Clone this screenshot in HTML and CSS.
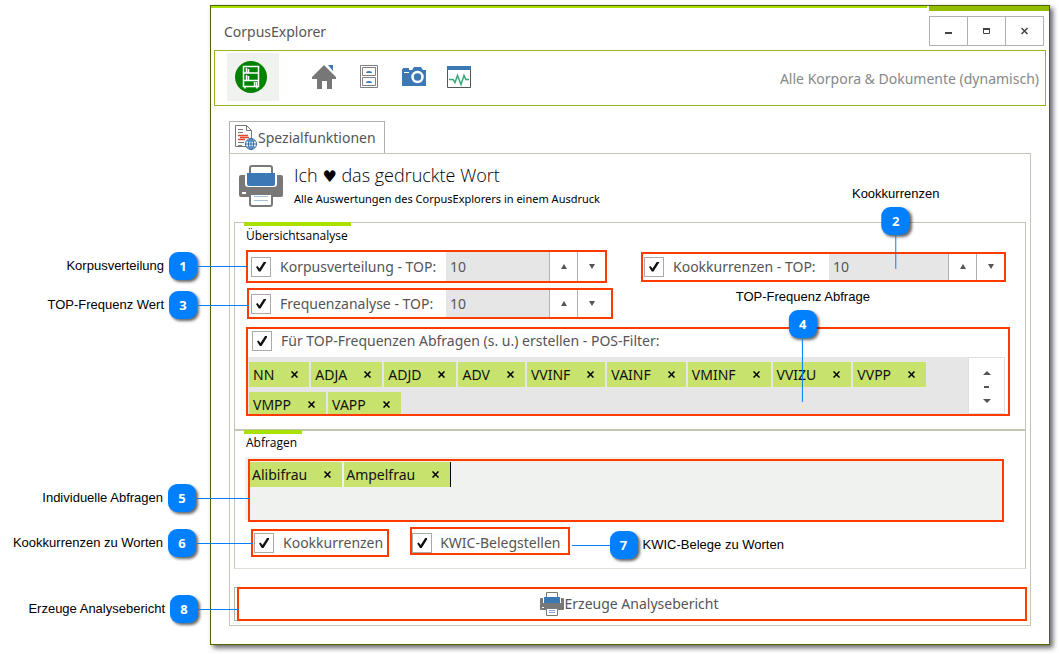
FILE: index.html
```html
<!DOCTYPE html>
<html lang="de">
<head>
<meta charset="utf-8">
<title>CorpusExplorer</title>
<link rel="stylesheet" href="styles.css">
</head>
<body>
<svg class="defs" aria-hidden="true">
  <symbol id="printer" viewBox="0 0 44 42">
    <path d="M11 9V3q0-2 2-2h18q2 0 2 2v6" fill="#fff" stroke="#787878" stroke-width="2"/>
    <path d="M0 12q0-2 2-2h4v9q0 3 3 3h26q3 0 3-3v-9h4q2 0 2 2v18q0 2-2 2H2q-2 0-2-2z" fill="#787878"/>
    <path d="M8 8h28v11q0 2-2 2H10q-2 0-2-2z" fill="#3c78b4"/>
    <path d="M3 27h4v2H3z" fill="#fff"/>
    <path d="M11 29h22v10q0 2-2 2H13q-2 0-2-2z" fill="#fff" stroke="#787878" stroke-width="2"/>
    <path d="M15 31.500h14M15 35.500h14" stroke="#a0c0e0"/>
  </symbol>
  <symbol id="printer-small" viewBox="0 0 24 24">
    <path d="M6.500 6V.5h11V6" fill="#fff" stroke="#787878"/>
    <path d="M0 7q0-1 1-1h2v5h18V6h2q1 0 1 1v10q0 1-1 1H1q-1 0-1-1z" fill="#787878"/>
    <path d="M4 5h16v6H4z" fill="#3c78b4"/>
    <path d="M2 15h2v1H2z" fill="#fff"/>
    <path d="M6.500 16.500h11v7h-11z" fill="#fff" stroke="#787878"/>
    <path d="M9 18.500h6M9 20.500h6" stroke="#80a8d8"/>
  </symbol>
  <symbol id="cross" viewBox="0 0 7 7">
    <path d="M.5.5l6 6M6.500.5l-6 6" stroke="#000" stroke-width="1.500"/>
  </symbol>
</svg>
<main class="window">
  <header class="titlebar">
    <span class="app-name">CorpusExplorer</span>
    <div class="controls">
      <button type="button" aria-label="Minimieren"><svg width="8" height="8"><path d="M0 5h7v2H0z" fill="#444"/></svg></button>
      <button type="button" aria-label="Maximieren"><svg width="8" height="8"><path d="M.5 1.500h6v5h-6z" fill="none" stroke="#444"/><path d="M0 1h7v2H0z" fill="#444"/></svg></button>
      <button type="button" aria-label="Schließen"><svg width="8" height="8"><path d="M.5 1l6 6M6.500 1l-6 6" stroke="#444" stroke-width="1.500"/></svg></button>
    </div>
  </header>
  <nav class="toolbar">
    <button type="button" class="logo" aria-label="Korpus">
      <svg width="32" height="32"><circle cx="16" cy="16" r="16" fill="#008200"/><g fill="none" stroke="#fff" stroke-width="1.500"><path d="M8.500 5.500h15v20h-15zM8.500 12h15M8.500 19.500h15M10 25.500v2M22 25.500v2M11.500 7v5M13.500 8v4M11.500 14v5M13.500 15v4M19.500 21v4M21.500 21v4"/></g></svg>
    </button>
    <button type="button" aria-label="Start"><svg width="24" height="24"><path d="M12 0l12 12v2h-4v10h-5v-8h-5v8H5V14H0v-2z" fill="#777"/><path d="M16 0h5v6z" fill="#3c78b4"/></svg></button>
    <button type="button" aria-label="Archiv"><svg width="24" height="24"><g fill="none" stroke="#808080"><path d="M3.500.5h17v22h-17zM5.500 2.500h13v8h-13zM5.500 12.500h13v8h-13z"/></g><path d="M9 8q0-2 3-2t3 2zM9 18q0-2 3-2t3 2z" fill="#3c78b4"/></svg></button>
    <button type="button" aria-label="Schnappschuss"><svg width="24" height="24"><path d="M0 6V4h1V3h6v2h3l2-3h7l2 3h3v16H0z" fill="#3c78b4"/><path d="M2 7h5v1H2z" fill="#fff"/><circle cx="15.500" cy="12" r="5" fill="none" stroke="#fff" stroke-width="2.500"/></svg></button>
    <button type="button" aria-label="Analyse"><svg width="24" height="24"><path d="M.5 1.500h23v21H.5z" fill="#fff" stroke="#555"/><path d="M0 1h24v4H0z" fill="#3c78b4"/><path d="M2 14.500h4l2 3 2.500-7 3.500 9 3-9 2 4h3" fill="none" stroke="#38a878" stroke-width="1.500"/></svg></button>
    <span class="scope">Alle Korpora &amp; Dokumente (dynamisch)</span>
  </nav>
  <div class="content">
    <button type="button" class="tab">
      <svg width="24" height="26"><g fill="none" stroke="#777"><path d="M12.500 21.500H1.500V.5h11l5 5v9M12.500.5v5h5"/><path d="M4 4.500h5M4 7.500h5M4 17.500h6M4 20.500h4"/></g><path d="M4 10.500h10M6 12.500h9M4 14.500h7" stroke="#e04830" stroke-width="1.500"/><circle cx="17" cy="19" r="5.500" fill="#fff" stroke="#2868a8"/><path d="M11.500 19h11M13 16h8M13 22h8M17 13.500v11" stroke="#2868a8"/><ellipse cx="17" cy="19" rx="2.500" ry="5.500" fill="none" stroke="#2868a8"/></svg>
      Spezialfunktionen
    </button>
    <section class="panel">
      <div class="heading">
        <svg width="44" height="42"><use href="#printer"/></svg>
        <div>
          <h1>Ich <span class="heart">♥</span> das gedruckte Wort</h1>
          <p>Alle Auswertungen des CorpusExplorers in einem Ausdruck</p>
        </div>
      </div>

      <section class="group overview">
        <h2>Übersichtsanalyse</h2>
        <div class="top-row">
          <div class="mark spin corpus">
            <label><input type="checkbox" checked><span>Korpusverteilung - TOP:</span></label>
            <input type="text" value="10" aria-label="Korpusverteilung TOP">
            <button type="button" aria-label="Mehr"><i class="up"></i></button><button type="button" aria-label="Weniger"><i class="down"></i></button>
            <div class="callout left"><span>Korpusverteilung</span><b>1</b><i class="line"></i></div>
          </div>
          <div class="mark spin cooc">
            <label><input type="checkbox" checked><span>Kookkurrenzen - TOP:</span></label>
            <input type="text" value="10" aria-label="Kookkurrenzen TOP">
            <button type="button" aria-label="Mehr"><i class="up"></i></button><button type="button" aria-label="Weniger"><i class="down"></i></button>
            <div class="callout above"><span>Kookkurrenzen</span><b>2</b><i class="line"></i></div>
          </div>
        </div>
        <div class="mark spin freq">
          <label><input type="checkbox" checked><span>Frequenzanalyse - TOP:</span></label>
          <input type="text" value="10" aria-label="Frequenzanalyse TOP">
          <button type="button" aria-label="Mehr"><i class="up"></i></button><button type="button" aria-label="Weniger"><i class="down"></i></button>
          <div class="callout left"><span>TOP-Frequenz Wert</span><b>3</b><i class="line"></i></div>
        </div>
        <div class="mark filter">
          <label><input type="checkbox" checked><span>Für TOP-Frequenzen Abfragen (s. u.) erstellen - POS-Filter:</span></label>
          <div class="filter-body">
            <div class="tokens">
              <span class="token">NN<button type="button" aria-label="NN entfernen"><svg width="7" height="7"><use href="#cross"/></svg></button></span>
              <span class="token">ADJA<button type="button" aria-label="ADJA entfernen"><svg width="7" height="7"><use href="#cross"/></svg></button></span>
              <span class="token">ADJD<button type="button" aria-label="ADJD entfernen"><svg width="7" height="7"><use href="#cross"/></svg></button></span>
              <span class="token">ADV<button type="button" aria-label="ADV entfernen"><svg width="7" height="7"><use href="#cross"/></svg></button></span>
              <span class="token">VVINF<button type="button" aria-label="VVINF entfernen"><svg width="7" height="7"><use href="#cross"/></svg></button></span>
              <span class="token">VAINF<button type="button" aria-label="VAINF entfernen"><svg width="7" height="7"><use href="#cross"/></svg></button></span>
              <span class="token">VMINF<button type="button" aria-label="VMINF entfernen"><svg width="7" height="7"><use href="#cross"/></svg></button></span>
              <span class="token">VVIZU<button type="button" aria-label="VVIZU entfernen"><svg width="7" height="7"><use href="#cross"/></svg></button></span>
              <span class="token">VVPP<button type="button" aria-label="VVPP entfernen"><svg width="7" height="7"><use href="#cross"/></svg></button></span>
              <span class="token">VMPP<button type="button" aria-label="VMPP entfernen"><svg width="7" height="7"><use href="#cross"/></svg></button></span>
              <span class="token">VAPP<button type="button" aria-label="VAPP entfernen"><svg width="7" height="7"><use href="#cross"/></svg></button></span>
            </div>
            <div class="scroller">
              <button type="button" aria-label="Nach oben"><i class="up"></i></button>
              <i class="dash"></i>
              <button type="button" aria-label="Nach unten"><i class="down"></i></button>
            </div>
          </div>
          <div class="callout above"><span>TOP-Frequenz Abfrage</span><b>4</b><i class="line"></i></div>
        </div>
      </section>

      <section class="group queries">
        <h2>Abfragen</h2>
        <div class="mark query-box">
          <div class="tokens">
            <span class="token">Alibifrau<button type="button" aria-label="Alibifrau entfernen"><svg width="7" height="7"><use href="#cross"/></svg></button></span>
            <span class="token caret">Ampelfrau<button type="button" aria-label="Ampelfrau entfernen"><svg width="7" height="7"><use href="#cross"/></svg></button></span>
          </div>
          <div class="callout left"><span>Individuelle Abfragen</span><b>5</b><i class="line"></i></div>
        </div>
        <div class="options">
          <div class="mark option">
            <label><input type="checkbox" checked><span>Kookkurrenzen</span></label>
            <div class="callout left"><span>Kookkurrenzen zu Worten</span><b>6</b><i class="line"></i></div>
          </div>
          <div class="mark option kwic">
            <label><input type="checkbox" checked><span>KWIC-Belegstellen</span></label>
            <div class="callout right"><i class="line"></i><b>7</b><span>KWIC-Belege zu Worten</span></div>
          </div>
        </div>
      </section>

      <div class="mark action">
        <button type="button" class="report"><svg width="24" height="24"><use href="#printer-small"/></svg>Erzeuge Analysebericht</button>
        <div class="callout left"><span>Erzeuge Analysebericht</span><b>8</b><i class="line"></i></div>
      </div>
    </section>
  </div>
</main>
</body>
</html>
```
FILE: styles.css
```css
* { box-sizing: border-box; }

body {
  margin: 0;
  padding: 5px 9px 9px 210px;
  background: #fff;
  color: #555;
  font: 14px/20px "Noto Sans", "Open Sans", sans-serif;
}

button, input {
  margin: 0;
  padding: 0;
  border: 0;
  border-radius: 0;
  background: none;
  color: inherit;
  font: inherit;
}

svg { display: block; flex: none; }
.defs { position: absolute; width: 0; height: 0; }

/* Window frame */
.window {
  border: 1px solid #506400;
  background: #fff;
  box-shadow: 3px 3px 5px rgba(0, 0, 0, .6);
}

.titlebar {
  display: flex;
  justify-content: space-between;
  height: 44px;
  padding-left: 13px;
  border-top: 2px solid #a8e000;
}
.app-name { padding-top: 14px; }
.controls {
  display: flex;
  align-items: flex-start;
  margin-top: -2px;
  padding-right: 6px;
  border-top: 5px solid #94bd00;
  box-shadow: -2px 0 0 #fff;
}
.controls button {
  display: grid;
  place-items: center;
  width: 39px;
  height: 30px;
  margin: 5px -1px 0 0;
  border: 1px solid #b0b0b0;
}

.toolbar {
  display: flex;
  align-items: center;
  gap: 21px;
  height: 56px;
  margin: 0 3px;
  padding: 0 6px 2px 12px;
  border: 1px solid #94b81c;
}
.toolbar button { width: 24px; }
.toolbar .logo {
  display: flex;
  align-items: center;
  width: 52px;
  height: 48px;
  margin-right: 12px;
  padding-left: 8px;
  background: #f0f2f0;
}
.scope { margin-left: auto; padding-top: 4px; color: #888; }

.content { padding: 15px 18px 18px; }
.tab {
  display: flex;
  align-items: center;
  height: 32px;
  padding: 0 8px 0 4px;
  border: 1px solid #b0b0b0;
  border-bottom: 0;
}

.panel { padding: 0 4px 4px; border: 1px solid #c5c5b5; }

.heading {
  display: flex;
  align-items: center;
  gap: 11px;
  height: 68px;
  padding: 0 5px 4px;
  color: #000;
}
.heading h1 { margin: 0; font: 300 18px/24px "Open Sans", "Noto Sans", sans-serif; }
.heading p { margin: 0; font-size: 11px; line-height: 20px; }
.heart { font-family: "DejaVu Sans", sans-serif; font-size: 16px; font-weight: 400; }

/* Groups */
.group { border: 1px solid #c5c5b5; }
.group h2 {
  width: max-content;
  margin-top: -1px;
  margin-bottom: 0;
  padding: 0 1px 0 2px;
  border-top: 4px solid #a8e000;
  color: #000;
  font: 400 12px/20px "Open Sans", "Noto Sans", sans-serif;
}
.overview { height: 208px; padding: 0 15px 0 11px; }
.overview h2 { margin-left: -2px; padding-right: 3px; }
.queries { height: 139px; padding: 0 21px 0 13px; border-bottom-color: #e0e0d8; }
.queries h2 { margin-left: -4px; padding-right: 5px; line-height: 18px; }

/* Highlighted areas */
.mark { position: relative; border: 2px solid #ff3c00; }

label { display: flex; align-items: center; gap: 9px; white-space: nowrap; }
input[type="checkbox"] {
  display: grid;
  place-items: center;
  flex: none;
  width: 20px;
  height: 20px;
  border: 1px solid #aaa;
  background: #fff;
  appearance: none;
}
input[type="checkbox"]:checked::before {
  content: "";
  width: 10px;
  height: 10px;
  background: #111;
  clip-path: polygon(0 55%, 15% 45%, 35% 70%, 80% 0, 100% 0, 100% 12%, 45% 100%, 28% 100%);
}

.top-row {
  display: flex;
  justify-content: space-between;
  align-items: center;
  margin-top: 4px;
  padding-right: 4px;
}
.spin { display: flex; align-items: stretch; width: 365px; height: 31px; padding-left: 3px; }
.spin label { width: 195px; }
.spin input[type="text"] { flex: 1; min-width: 0; padding: 0 4px; background: #e6e6e6; }
.spin button { display: grid; place-items: center; width: 28px; border-left: 1px solid #b0b0b0; }
.corpus { width: 361px; height: 33px; }
.cooc { height: 30px; padding-left: 1px; }
.cooc label { width: 185px; }
.freq { width: 366px; margin: 5px 0 0 1px; padding: 0 6px 0 2px; }

.up, .down { width: 0; border: 3px solid transparent; border-top: 0; border-bottom: 5px solid #555; }
.down { border-top: 5px solid #555; border-bottom: 0; }

.filter { margin-top: 8px; height: 89px; }
.filter label { height: 28px; padding: 0 4px 4px; }
.filter-body { display: flex; height: 57px; background: #e6e6e6; }
.tokens { display: flex; flex-wrap: wrap; align-content: flex-start; flex: 1; gap: 5px 2px; }
.filter .tokens { padding: 5px 20px 0 1px; overflow: hidden; }
.token {
  display: flex;
  align-items: center;
  gap: 17px;
  height: 25px;
  padding: 0 11px 0 4px;
  background: #c8e26e;
  color: #111;
}
.scroller {
  display: flex;
  flex-direction: column;
  align-items: center;
  justify-content: space-between;
  width: 37px;
  margin-right: 3px;
  padding: 13px 0 10px;
  border: 1px solid #e0e0e0;
  background: #fff;
  box-shadow: 3px 0 0 #fff;
}
.scroller button { line-height: 0; }
.scroller .up, .scroller .down { display: block; border-left-width: 4px; border-right-width: 4px; }
.scroller .up { border-bottom-width: 4px; }
.scroller .down { border-top-width: 4px; }
.dash { width: 5px; height: 2px; background: #555; }

.query-box { height: 63px; margin-top: 7px; background: #f0f2f0; box-shadow: -3px -2px 0 #f0f2f0; }
.query-box .tokens { padding-top: 1px; }
.query-box .token { padding-left: 2px; }
.caret { border-right: 1px solid #000; }

.options { display: flex; gap: 21px; margin: 7px 0 0 3px; }
.option { height: 28px; padding: 2px 4px 0 1px; }
.kwic { margin-top: -2px; padding: 4px 7px 0 0; }
.kwic label { gap: 8px; }

.action { margin: 18px -1px 0 3px; box-shadow: -3px 0 0 -1px #fff, -3px 0 0 #b0b0b0; }
.report { display: flex; align-items: center; justify-content: center; gap: 1px; width: 100%; height: 30px; padding-right: 6px; background: #fff; }

/* Numbered callouts, each tied to the area that it explains */
.callout {
  position: absolute;
  z-index: 1;
  display: flex;
  align-items: center;
  color: #000;
  font: 13px/16px "Liberation Sans", Arial, sans-serif;
  white-space: nowrap;
  pointer-events: none;
}
.callout b {
  display: grid;
  place-items: center;
  width: 28px;
  height: 28px;
  border-radius: 9px;
  background: #0080ff;
  color: #fff;
  font: 700 13px/16px "Open Sans", sans-serif;
  box-shadow: 2px 2px 3px rgba(0, 0, 0, .6);
}
.line { background: #0080ff; }
.left { top: 0; right: 100%; }
.left span { margin-right: 5px; }
.left .line { width: 51px; height: 1px; }
.freq .left { top: 1px; }
.freq .left .line { width: 52px; }
.query-box .left { top: 23px; }
.query-box .line { width: 54px; }
.option .left { top: -2px; }
.option .left .line { width: 57px; }
.action .left { top: 6px; }
.action .line { width: 41px; }
.right { top: 2px; left: 100%; }
.right .line { width: 38px; height: 1px; margin-left: 4px; }
.right span { margin-left: 5px; }
.above { flex-direction: column; left: 70%; transform: translateX(-50%); }
.above span { margin-bottom: 5px; }
.above .line { width: 1px; height: 34px; }
.cooc .above { bottom: 11px; }
.filter .above { left: 73%; bottom: 12px; }
.filter .above .line { height: 64px; }
```
